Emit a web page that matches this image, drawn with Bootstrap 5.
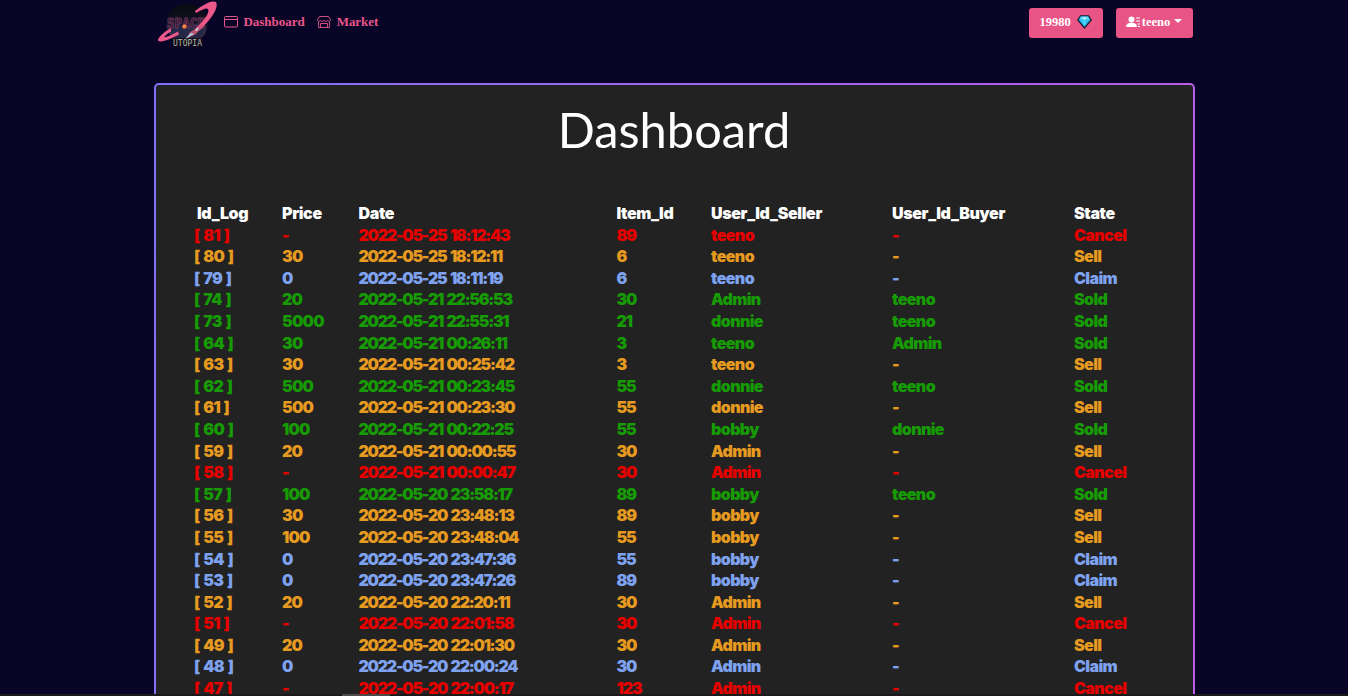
<!DOCTYPE html>
<html lang="en">
<head>
<meta charset="utf-8">
<title>Dashboard</title>
<link href="https://cdn.jsdelivr.net/npm/bootstrap@5.3.0/dist/css/bootstrap.min.css" rel="stylesheet">
<style>
html,body{height:100%;overflow:hidden}
body{background:#090527;font-family:"Liberation Serif",serif;color:#fff}
.shell{width:1041px}
.topbar{height:83px;padding:0 2px 0 3px}
.brand-logo{width:62px;height:48px}
.topbar .nav-link{color:#e8558a;font-weight:700;font-size:13px;letter-spacing:-.03px;line-height:20px;padding:0}
.pill{background:#e95487;color:#fff;font-weight:700;font-size:12.5px;line-height:18px;height:30px;border:0;border-radius:3px;padding:0 0 2px}
.pill:hover{background:#d9467a;color:#fff}
.pill.dropdown-toggle::after{border-width:4px 4px 0;margin-left:4px;margin-bottom:2px}
.panel{border:2px solid transparent;border-bottom:0;border-radius:5px 5px 0 0;background:linear-gradient(#222,#222) padding-box,linear-gradient(100deg,#8072f8,#bd5ce8) border-box}
.panel h1{font-family:Lato,sans-serif;font-size:48.8px;font-weight:400;line-height:58px;margin:15px 0 0}
.logs{font-family:Inter,sans-serif;font-weight:900;font-size:16px;letter-spacing:-.6px;margin-top:44px;padding-left:38.5px;white-space:pre}
.log-row{display:grid;grid-template-columns:88px 76.5px 258px 94.5px 181px 182px 1fr;height:21.6px;line-height:22px}
.log-row span:first-child{word-spacing:1px}
.log-row span:nth-child(2){letter-spacing:-.75px}
.log-row span:nth-child(3){letter-spacing:-1.25px;word-spacing:1.5px}
.log-row span:nth-child(4){letter-spacing:-1.1px}
.log-row.log-head span{letter-spacing:-.35px}
.log-head span:first-child{padding-left:3px}
.Cancel{color:#e60000}.Sell{color:#e69a20}.Claim{color:#7ea2f0}.Sold{color:#179b05}
.bottom-strip{height:2px;background:#1b1919}
.bottom-strip div{width:48px;height:2px;margin-left:342px;background:#4c4a4b}
</style>
</head>
<body class="d-flex flex-column">
<main class="shell mx-auto flex-grow-1 overflow-hidden d-flex flex-column">
<nav class="topbar d-flex align-items-start flex-shrink-0">
<a href="#" aria-label="Space Utopia"><svg class="brand-logo d-block" viewBox="0 0 62 48">
<defs><linearGradient id="sky" x2="0" y2="1"><stop stop-color="#080910"/><stop offset=".48" stop-color="#141224"/><stop offset=".72" stop-color="#37304e"/><stop offset="1" stop-color="#151020"/></linearGradient></defs>
<circle cx="30" cy="24" r="20.5" fill="url(#sky)"/>
<path d="M13 30 L22 24 L29 29 L39 23 L48 31 Q41 40 29 40 Q18 39 13 30" fill="#242746"/>
<text x="10" y="28" font-family="DejaVu Sans Mono,monospace" font-size="13.5" font-weight="bold" textLength="38" lengthAdjust="spacingAndGlyphs" fill="#18132a" stroke="#72385f" stroke-width=".9">SPACE</text>
<circle cx="27.5" cy="26.5" r="2.2" fill="#ee7238"/><circle cx="27" cy="25.8" r=".8" fill="#ffc17c"/>
<path d="M14 28C5 33 .5 38.500 1 40.5Q4 44 22 34.5L21 31.500Q9 38 7.500 37Q7.500 35.500 14 31.500Z" fill="#ed588b"/>
<path d="M38 11Q53-1 59 2Q63 10 43 30L35 36L36 31Q54 14 51 9Q49 7 39 13Z" fill="#ed588b"/>
<path d="M29 39L33 32L46 25L39 34Z" fill="#b8546f"/><path d="M28 39L34 33L37 34Z" fill="#9edbe9"/><path d="M38 30L42 27L40 31Z" fill="#c9f2f3"/>
<text x="16" y="45.500" font-family="DejaVu Sans Mono,monospace" font-size="8" textLength="29" lengthAdjust="spacingAndGlyphs" fill="#bab9b2" stroke="#07070d" stroke-width="1.6" paint-order="stroke">UTOPIA</text>
</svg></a>
<div class="d-flex align-items-center" style="margin-top:12px;margin-left:5px">
<a class="nav-link d-flex align-items-center" href="#"><svg width="14" height="12" viewBox="0 0 14 12" fill="none" stroke="#e8558a"><rect x=".5" y=".5" width="13" height="10.5" rx="1"/><path d="M.5 3.500H13.500"/></svg><span style="margin-left:6px">Dashboard</span></a>
<a class="nav-link d-flex align-items-center" style="margin-left:12px" href="#"><svg width="14" height="12" viewBox="0 0 14 12" fill="none" stroke="#e8558a" stroke-width=".9"><path d="M2.500.5H11.500L13.500 3.500V4.500Q12 6.500 10.300 4.500Q8.700 6.500 7 4.500Q5.300 6.500 3.700 4.500Q2 6.500.5 4.500V3.500ZM1.500 6V11.500H12.500V6M3.500 7.500H10.500V11.500M3.500 7.500V11.500"/></svg><span style="margin-left:6px">Market</span></a>
</div>
<div class="ms-auto d-flex" style="margin-top:8px;gap:13px">
<button class="btn pill d-flex align-items-center justify-content-center" style="width:74px"><span>19980</span><svg style="margin-left:6px" width="15" height="14" viewBox="0 0 15 14"><path d="M3.500.8H11.500L14.200 5L7.500 13L.8 5Z" fill="#2cb9ef" stroke="#121c29" stroke-width="1.2"/><path d="M4 1.500H11L12 4.500H3Z" fill="#63dcfb"/><path d="M5 5L7.500 2L10 5L7.500 11Z" fill="#4bd0fa"/><path d="M5.500 4L7.500 2L9.500 4Z" fill="#e5fcff"/></svg></button>
<button class="btn pill d-flex align-items-center justify-content-center dropdown-toggle" style="width:77px"><svg width="14" height="12" viewBox="0 0 14 12" fill="#fff"><circle cx="5.500" cy="3.500" r="3"/><path d="M0 11Q0 6.800 5.500 6.800T11 11ZM10 1.500H14V2.500H10ZM10 4.500H14V5.500H10ZM11.500 7.500H14V8.500H11.500ZM12 10H14V11H12Z"/></svg><span style="margin-left:2px">teeno</span></button>
</div>
</nav>
<section class="panel flex-grow-1 overflow-hidden">
<h1 class="text-center">Dashboard</h1>
<div class="logs" id="logs"></div>
</section>
</main>
<div class="bottom-strip flex-shrink-0"><div></div></div>
<script src="https://cdn.jsdelivr.net/npm/bootstrap@5.3.0/dist/js/bootstrap.bundle.min.js"></script>
<script>
const data=`81|-|2022-05-25 18:12:43|89|teeno|-|Cancel
80|30|2022-05-25 18:12:11|6|teeno|-|Sell
79|0|2022-05-25 18:11:19|6|teeno|-|Claim
74|20|2022-05-21 22:56:53|30|Admin|teeno|Sold
73|5000|2022-05-21 22:55:31|21|donnie|teeno|Sold
64|30|2022-05-21 00:26:11|3|teeno|Admin|Sold
63|30|2022-05-21 00:25:42|3|teeno|-|Sell
62|500|2022-05-21 00:23:45|55|donnie|teeno|Sold
61|500|2022-05-21 00:23:30|55|donnie|-|Sell
60|100|2022-05-21 00:22:25|55|bobby|donnie|Sold
59|20|2022-05-21 00:00:55|30|Admin|-|Sell
58|-|2022-05-21 00:00:47|30|Admin|-|Cancel
57|100|2022-05-20 23:58:17|89|bobby|teeno|Sold
56|30|2022-05-20 23:48:13|89|bobby|-|Sell
55|100|2022-05-20 23:48:04|55|bobby|-|Sell
54|0|2022-05-20 23:47:36|55|bobby|-|Claim
53|0|2022-05-20 23:47:26|89|bobby|-|Claim
52|20|2022-05-20 22:20:11|30|Admin|-|Sell
51|-|2022-05-20 22:01:58|30|Admin|-|Cancel
49|20|2022-05-20 22:01:30|30|Admin|-|Sell
48|0|2022-05-20 22:00:24|30|Admin|-|Claim
47|-|2022-05-20 22:00:17|123|Admin|-|Cancel`.split('\n').map(r=>r.split('|'));
const row=(cells,cls)=>`<div class="log-row ${cls}">${cells.map(c=>`<span>${c}</span>`).join('')}</div>`;
document.getElementById('logs').innerHTML=row(['Id_Log','Price','Date','Item_Id','User_Id_Seller','User_Id_Buyer','State'],'log-head')+data.map(r=>row([`[ ${r[0]} ]`,...r.slice(1)],r[6])).join('');
</script>
</body>
</html>
